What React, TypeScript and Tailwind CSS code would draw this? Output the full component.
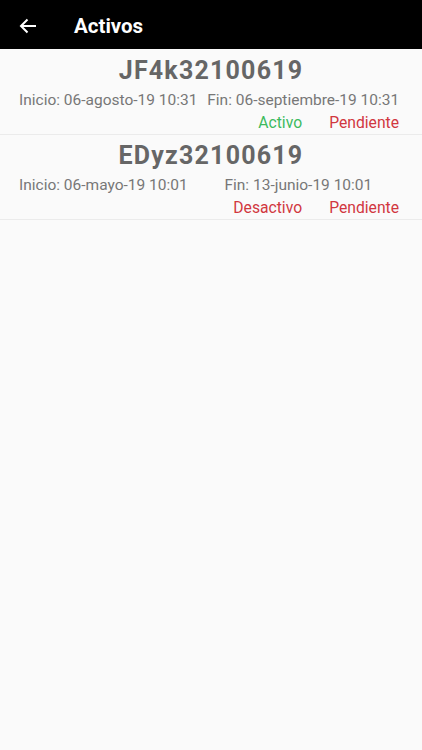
import React from "react";

type Item = {
  code: string;
  inicio: string;
  fin: string;
  estado: string;
  estadoColor: string;
};

const items: Item[] = [
  {
    code: "JF4k32100619",
    inicio: "Inicio: 06-agosto-19 10:31",
    fin: "Fin: 06-septiembre-19 10:31",
    estado: "Activo",
    estadoColor: "text-[#3dba5e]",
  },
  {
    code: "EDyz32100619",
    inicio: "Inicio: 06-mayo-19 10:01",
    fin: "Fin: 13-junio-19 10:01",
    estado: "Desactivo",
    estadoColor: "text-[#d1373f]",
  },
];

export default function App() {
  return (
    <div
      className="w-[422px] h-[750px] bg-[#fafafa] flex flex-col overflow-hidden"
      style={{ fontFamily: "Roboto, 'Liberation Sans', sans-serif" }}
    >
      <div className="h-[49px] bg-black flex items-center pt-[3px] shrink-0">
        <svg
          width="18"
          height="16"
          viewBox="0 0 18 16"
          className="ml-[19px]"
          fill="none"
          stroke="white"
          strokeWidth="2"
        >
          <path d="M17 8H2" />
          <path d="M8.5 1.5L2 8l6.5 6.5" />
        </svg>
        <span className="ml-[37px] text-white text-[20.5px] font-bold leading-none">
          Activos
        </span>
      </div>
      <div className="pt-[1px] flex flex-col">
        {items.map((it) => (
          <div
            key={it.code}
            className="h-[85px] border-b border-[#ebebeb] pt-[6px] flex flex-col"
          >
            <div className="text-center text-[25px] tracking-[1.2px] leading-[30px] font-bold text-[#666666]">
              {it.code}
            </div>
            <div className="mt-[2px] flex gap-[4px] pl-[19px] pr-[17px] text-[15.5px] leading-[24px] text-[#777777]">
              <span className="flex-auto whitespace-nowrap">{it.inicio}</span>
              <span className="flex-auto whitespace-nowrap">{it.fin}</span>
            </div>
            <div className="flex justify-end gap-[27px] pr-[23px] text-[15.7px] leading-[22px]">
              <span className={it.estadoColor}>{it.estado}</span>
              <span className="text-[#d1373f]">Pendiente</span>
            </div>
          </div>
        ))}
      </div>
    </div>
  );
}
